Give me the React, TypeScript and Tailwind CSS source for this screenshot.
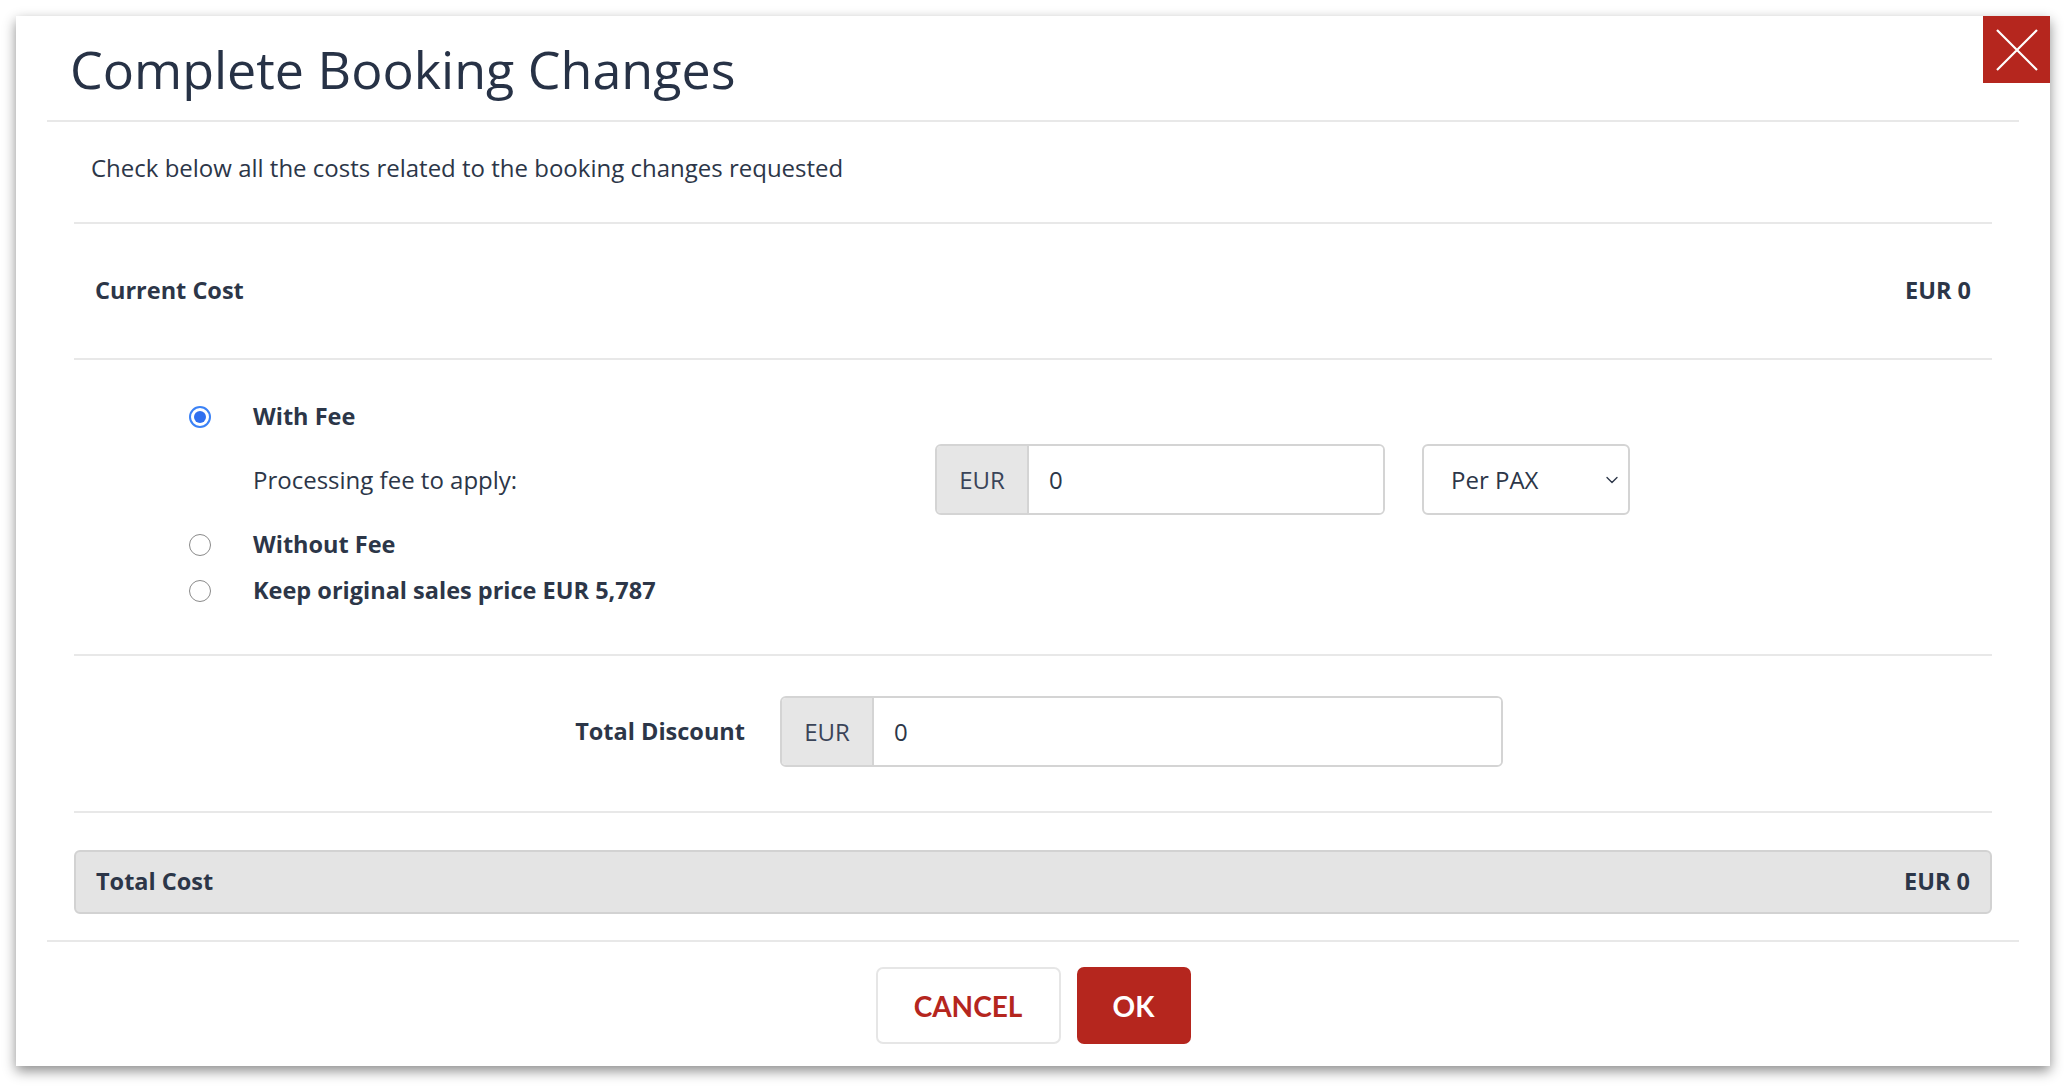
import { ChevronDown } from "lucide-react";

function Radio({ checked }: { checked?: boolean }) {
  return checked ? (
    <span className="w-[22px] h-[22px] rounded-full border-2 border-[#3b82f6] bg-white flex items-center justify-center shrink-0">
      <span className="w-[12px] h-[12px] rounded-full bg-[#2f6fef]"></span>
    </span>
  ) : (
    <span className="w-[22px] h-[22px] rounded-full border-[1.5px] border-[#8a8a8a] bg-white shrink-0"></span>
  );
}

function EurInput({ width }: { width: string }) {
  return (
    <div className={`flex h-[71px] border-2 border-[#d4d4d4] rounded-[6px] overflow-hidden ${width}`}>
      <div className="w-[92px] bg-[#e6e6e6] border-r-2 border-[#d4d4d4] flex items-center justify-center text-[24px] text-[#3a4458]">
        EUR
      </div>
      <div className="flex-1 bg-white flex items-center pl-[20px] text-[24px] text-[#2c3648]">0</div>
    </div>
  );
}

export default function App() {
  return (
    <div className="min-h-screen bg-white p-[16px] font-['Open_Sans','Liberation_Sans',sans-serif] text-[#2c3648]">
      <div className="relative w-[2034px] h-[1050px] bg-white shadow-[0_5px_12px_rgba(0,0,0,0.45)] px-[31px]">
        {/* Close */}
        <button className="absolute top-0 right-0 w-[67px] h-[67px] bg-[#b5261e] flex items-center justify-center">
          <svg width="42" height="42" viewBox="0 0 42 42" fill="none" stroke="white" strokeWidth="2.2">
            <path d="M1 1L41 41M41 1L1 41" />
          </svg>
        </button>

        {/* Header */}
        <div className="h-[106px] border-b-2 border-[#e8e8e8] flex items-center pl-[23px]">
          <h1 className="text-[52px] text-[#273246] pt-[2px]">Complete Booking Changes</h1>
        </div>

        {/* Body */}
        <div className="px-[27px]">
          <div className="h-[102px] border-b-2 border-[#e8e8e8] flex items-center pl-[17px] pb-[8px] text-[24px]">
            Check below all the costs related to the booking changes requested
          </div>

          <div className="h-[136px] border-b-2 border-[#e8e8e8] flex items-center justify-between px-[21px] text-[23.5px] font-bold">
            <span>Current Cost</span>
            <span>EUR 0</span>
          </div>

          <div className="h-[296px] border-b-2 border-[#e8e8e8] pt-[45px] pl-[115px] text-[24px]">
            <div className="flex items-center gap-[42px] h-[24px]">
              <Radio checked />
              <span className="font-bold text-[23.5px]">With Fee</span>
            </div>
            <div className="flex items-center pl-[64px] mt-[15px]">
              <span className="w-[682px]">Processing fee to apply:</span>
              <EurInput width="w-[450px]" />
              <div className="ml-[37px] w-[208px] h-[71px] border-2 border-[#d4d4d4] rounded-[6px] flex items-center justify-between pl-[27px] pr-[6px] text-[24px]">
                <span>Per PAX</span>
                <ChevronDown size={20} strokeWidth={1.6} />
              </div>
            </div>
            <div className="flex items-center gap-[42px] h-[24px] mt-[18px]">
              <Radio />
              <span className="font-bold text-[23.5px]">Without Fee</span>
            </div>
            <div className="flex items-center gap-[42px] h-[24px] mt-[22px]">
              <Radio />
              <span className="font-bold text-[23.5px]">Keep original sales price EUR 5,787</span>
            </div>
          </div>

          <div className="h-[157px] border-b-2 border-[#e8e8e8] flex items-center pb-[4px] text-[23.5px]">
            <span className="w-[671px] text-right font-bold">Total Discount</span>
            <div className="ml-[35px]">
              <EurInput width="w-[723px]" />
            </div>
          </div>

          <div className="mt-[37px] h-[64px] bg-[#e4e4e4] border-2 border-[#d2d2d2] rounded-[6px] flex items-center justify-between px-[20px] text-[23.5px] font-bold">
            <span>Total Cost</span>
            <span>EUR 0</span>
          </div>
        </div>

        {/* Footer */}
        <div className="mt-[26px] border-t-2 border-[#e8e8e8] flex justify-center gap-[16px] pt-[25px] font-['Lato','Liberation_Sans',sans-serif]">
          <button className="w-[185px] h-[77px] border-2 border-[#e6e6e6] rounded-[7px] bg-white text-[#b5261e] font-bold text-[28px]">
            CANCEL
          </button>
          <button className="w-[114px] h-[77px] rounded-[7px] bg-[#b5261e] text-white font-bold text-[28px]">
            OK
          </button>
        </div>
      </div>
    </div>
  );
}
